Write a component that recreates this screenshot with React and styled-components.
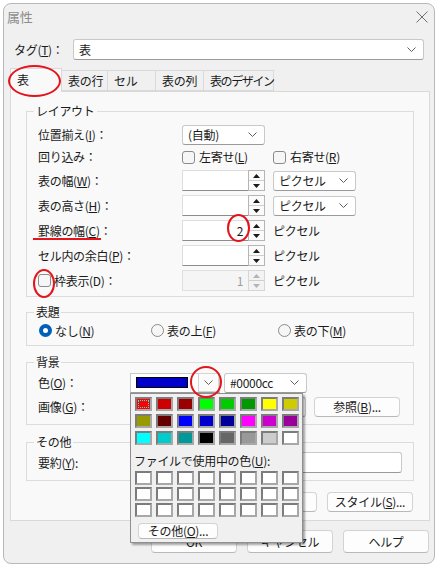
import styled, { createGlobalStyle } from "styled-components";

const GlobalStyle = createGlobalStyle`
  html, body {
    margin: 0;
    padding: 0;
    background: #ffffff;
  }
  body {
    font-family: "Noto Sans CJK JP", "Noto Sans", sans-serif;
    font-size: 12px;
    letter-spacing: -0.3px;
    color: #1b1b1b;
  }
  * {
    box-sizing: border-box;
  }
`;

const Root = styled.div`
  position: relative;
  width: 437px;
  height: 566px;
  padding: 3px 0 0 3px;
`;

const Window = styled.div`
  width: 432px;
  height: 561px;
  border: 1px solid #b8b8b8;
  border-radius: 8px;
  background: #f0f0f0;
  overflow: hidden;
  display: flex;
  flex-direction: column;
  padding: 0 4px 0 6px;
`;

const TitleBar = styled.div`
  height: 26px;
  display: flex;
  align-items: center;
  justify-content: space-between;
  margin-left: -3px;
  padding-right: 2px;
  color: #8d8d8d;
  font-size: 13px;
  line-height: 16px;
`;

const TagRow = styled.div`
  margin-top: 9px;
  height: 21px;
  display: flex;
  align-items: center;
  padding: 0 6px 0 4px;
`;

const TagLabel = styled.span`
  width: 59px;
  line-height: 16px;
`;

const Box = styled.div`
  height: ${(p) => p.$h || 20}px;
  width: ${(p) => (p.$w ? `${p.$w}px` : "auto")};
  flex: ${(p) => (p.$w ? "none" : 1)};
  background: #ffffff;
  border: 1px solid #c9c9c9;
  border-bottom-color: #9a9a9a;
  border-radius: 3px;
  display: flex;
  align-items: center;
  justify-content: space-between;
  padding: 0 7px 0 5px;
  line-height: 16px;
  white-space: nowrap;
`;

const Chevron = () => (
  <svg width="9" height="5" viewBox="0 0 9 5">
    <polyline points="0.5,0.5 4.5,4.5 8.5,0.5" fill="none" stroke="#5f5f5f" strokeWidth="1" />
  </svg>
);

const Tabs = styled.div`
  margin-top: 8px;
  height: 23px;
  display: flex;
  align-items: flex-end;
`;

const Tab = styled.div`
  position: relative;
  z-index: ${(p) => (p.$active ? 2 : 0)};
  width: ${(p) => p.$w}px;
  height: ${(p) => (p.$active ? 24 : 21)}px;
  margin-bottom: ${(p) => (p.$active ? -1 : 0)}px;
  margin-left: ${(p) => (p.$first ? 0 : -1)}px;
  background: ${(p) => (p.$active ? "#f9f9f9" : "#f0f0f0")};
  border: 1px solid #d9d9d9;
  border-bottom: ${(p) => (p.$active ? "none" : "1px solid #d9d9d9")};
  padding: ${(p) => (p.$active ? "3px" : "2px")} 0 0 6px;
  line-height: 16px;
  white-space: nowrap;
  letter-spacing: ${(p) => (p.$tight ? "-1.4px" : "-0.3px")};
`;

const Panel = styled.div`
  height: 430px;
  background: #f9f9f9;
  border: 1px solid #d9d9d9;
  padding: 11px 15px 0 15px;
  display: flex;
  flex-direction: column;
`;

const Group = styled.fieldset`
  margin: ${(p) => p.$mt || 0}px 0 0 0;
  padding: ${(p) => p.$pt || 0}px 11px ${(p) => p.$pb || 0}px 11px;
  border: 1px solid #dcdcdc;
  min-width: 0;
`;

const Legend = styled.legend`
  margin-left: -4px;
  padding: 0 2px;
  line-height: 16px;
  font-size: 12px;
`;

const Row = styled.div`
  height: ${(p) => p.$h}px;
  display: flex;
  align-items: center;
  margin-top: ${(p) => p.$mt || 0}px;
`;

const RowLabel = styled.span`
  width: ${(p) => p.$w}px;
  flex: none;
  display: flex;
  align-items: center;
  line-height: 16px;
  white-space: nowrap;
`;

const U = styled.u`
  text-underline-offset: 1px;
`;

const Check = styled.span`
  width: 13px;
  height: 13px;
  flex: none;
  border: 1px solid #8b8b8b;
  border-radius: 3px;
  background: #f6f6f6;
  margin-right: ${(p) => p.$mr ?? 4}px;
`;

const CheckItem = styled.label`
  width: ${(p) => p.$w}px;
  margin-left: ${(p) => p.$ml || 0}px;
  display: flex;
  align-items: center;
  line-height: 16px;
  white-space: nowrap;
`;

const Radio = styled.span`
  width: 13px;
  height: 13px;
  flex: none;
  border-radius: 50%;
  margin-right: 3px;
  border: ${(p) => (p.$on ? "4px solid #005fb8" : "1px solid #8b8b8b")};
  background: ${(p) => (p.$on ? "#ffffff" : "#f6f6f6")};
`;

const SpinWrap = styled.div`
  width: 83px;
  height: 21px;
  flex: none;
  display: flex;
`;

const SpinText = styled.div`
  flex: 1;
  background: ${(p) => (p.$off ? "#f5f5f5" : "#ffffff")};
  border: 1px solid ${(p) => (p.$off ? "#e0e0e0" : "#dedede")};
  border-bottom-color: ${(p) => (p.$off ? "#e0e0e0" : "#8d8d8d")};
  border-right: none;
  text-align: right;
  padding-right: 5px;
  line-height: 19px;
  color: ${(p) => (p.$off ? "#9c9c9c" : "#1b1b1b")};
`;

const SpinBtns = styled.div`
  width: 17px;
  display: flex;
  flex-direction: column;
  border: 1px solid ${(p) => (p.$off ? "#d6d6d6" : "#b5b5b5")};
  background: ${(p) => (p.$off ? "#f3f3f3" : "#fbfbfb")};
`;

const SpinHalf = styled.div`
  flex: 1;
  display: flex;
  align-items: center;
  justify-content: center;
  border-top: ${(p) => (p.$bottom ? "1px solid #cfcfcf" : "none")};
`;

const Arrow = ({ down, off }) => (
  <svg width="7" height="4" viewBox="0 0 7 4">
    <polygon
      points={down ? "0,0 7,0 3.5,4" : "0,4 7,4 3.5,0"}
      fill={off ? "#b4b4b4" : "#1b1b1b"}
    />
  </svg>
);

const Unit = styled.span`
  margin-left: 8px;
  line-height: 16px;
`;

const Button = styled.div`
  width: ${(p) => p.$w || 86}px;
  height: ${(p) => p.$h || 20}px;
  flex: none;
  display: flex;
  align-items: center;
  justify-content: center;
  background: #fdfdfd;
  border: 1px solid #d3d3d3;
  border-bottom-color: #b8b8b8;
  border-radius: 4px;
  line-height: 16px;
  white-space: nowrap;
  margin: ${(p) => p.$m || 0};
`;

const PanelButtons = styled.div`
  margin-top: 11px;
  display: flex;
  justify-content: flex-end;
  gap: 10px;
  padding-right: 1px;
`;

const DialogButtons = styled.div`
  margin-top: 9px;
  display: flex;
  justify-content: flex-end;
  gap: 10px;
  padding-right: 1px;
`;

const ColorCombo = styled.div`
  width: 90px;
  height: 20px;
  flex: none;
  display: flex;
  align-items: center;
  background: #ffffff;
  border: 1px solid #c9c9c9;
  border-bottom-color: #9a9a9a;
  padding-left: 5px;
  margin-right: 4px;
`;

const ColorBar = styled.div`
  width: 52px;
  height: 11px;
  background: ${(p) => p.$c};
  border: 1px solid #000000;
`;

const DropBtn = styled.div`
  margin-left: auto;
  width: 21px;
  height: 19px;
  display: flex;
  align-items: center;
  justify-content: center;
  border: 1px solid #d4d4d4;
  background: #fbfbfb;
`;

const Popup = styled.div`
  position: absolute;
  z-index: 5;
  left: 130px;
  top: 393px;
  width: 173px;
  height: 150px;
  background: #f0f0f0;
  border: 1px solid #8f8f8f;
  box-shadow: 2px 2px 2px rgba(0, 0, 0, 0.35);
  padding: 3px 0 0 4px;
`;

const Palette = styled.div`
  display: grid;
  grid-template-columns: repeat(8, 17px);
  grid-auto-rows: 14px;
  column-gap: 4px;
  row-gap: ${(p) => (p.$used ? 2 : 3)}px;
  margin-top: ${(p) => p.$mt || 0}px;
`;

const Cell = styled.div`
  position: relative;
  background: ${(p) => p.$c};
  border: 2px solid;
  border-color: #7c7c7c #a8a8a8 #a8a8a8 #7c7c7c;
  &::after {
    content: "";
    display: ${(p) => (p.$focus ? "block" : "none")};
    position: absolute;
    inset: 1px;
    border: 1px dotted #00ffff;
  }
`;

const UsedLabel = styled.div`
  margin: 9px 0 0 -1px;
  line-height: 14px;
  white-space: nowrap;
`;

const Ring = styled.div`
  position: absolute;
  z-index: 10;
  left: ${(p) => p.$x}px;
  top: ${(p) => p.$y}px;
  width: ${(p) => p.$w}px;
  height: ${(p) => p.$h}px;
  border: 2px solid #e3141b;
  border-radius: 50%;
`;

const RedLine = styled.div`
  position: absolute;
  z-index: 10;
  left: 33px;
  top: 238px;
  width: 68px;
  height: 2px;
  background: #e3141b;
`;

const Spin = ({ value, off }) => (
  <SpinWrap>
    <SpinText $off={off}>{value}</SpinText>
    <SpinBtns $off={off}>
      <SpinHalf>
        <Arrow off={off} />
      </SpinHalf>
      <SpinHalf $bottom>
        <Arrow down off={off} />
      </SpinHalf>
    </SpinBtns>
  </SpinWrap>
);

const Select = ({ w, children }) => (
  <Box $w={w} $h={20}>
    <span>{children}</span>
    <Chevron />
  </Box>
);

const paletteColors = [
  "#ff0000", "#cc0000", "#990000", "#00ff00", "#00cc00", "#009900", "#ffff00", "#cccc00",
  "#999900", "#660000", "#0000ff", "#0000cc", "#000099", "#ff00ff", "#cc00cc", "#990099",
  "#00ffff", "#00cccc", "#009999", "#000000", "#666666", "#999999", "#cccccc", "#ffffff",
];

const tabs = [
  { t: "表", w: 52, active: true },
  { t: "表の行", w: 47 },
  { t: "セル", w: 49 },
  { t: "表の列", w: 49 },
  { t: "表のデザイン", w: 71, tight: true },
];

const App = () => {
  return (
    <Root>
      <GlobalStyle />
      <Window>
        <TitleBar>
          <span>属性</span>
          <svg width="12" height="12" viewBox="0 0 12 12">
            <path d="M0.5 0.5 L11.5 11.5 M11.5 0.5 L0.5 11.5" stroke="#6f6f6f" strokeWidth="1" />
          </svg>
        </TitleBar>

        <TagRow>
          <TagLabel>
            タグ(<U>T</U>)：
          </TagLabel>
          <Box $h={21}>
            <span>表</span>
            <Chevron />
          </Box>
        </TagRow>

        <Tabs>
          {tabs.map((tab, i) => (
            <Tab key={tab.t} $w={tab.w} $active={tab.active} $tight={tab.tight} $first={i === 0}>
              {tab.t}
            </Tab>
          ))}
        </Tabs>

        <Panel>
          <Group $pt={4} $pb={3}>
            <Legend>レイアウト</Legend>
            <Row $h={23}>
              <RowLabel $w={144}>
                位置揃え(<U>I</U>)：
              </RowLabel>
              <Select w={83}>(自動)</Select>
            </Row>
            <Row $h={22}>
              <RowLabel $w={144}>回り込み：</RowLabel>
              <CheckItem $w={91}>
                <Check />
                左寄せ(<U>L</U>)
              </CheckItem>
              <CheckItem $w={100}>
                <Check />
                右寄せ(<U>R</U>)
              </CheckItem>
            </Row>
            <Row $h={25}>
              <RowLabel $w={144}>
                表の幅(<U>W</U>)：
              </RowLabel>
              <Spin />
              <Unit>
                <Select w={83}>ピクセル</Select>
              </Unit>
            </Row>
            <Row $h={25}>
              <RowLabel $w={144}>
                表の高さ(<U>H</U>)：
              </RowLabel>
              <Spin />
              <Unit>
                <Select w={83}>ピクセル</Select>
              </Unit>
            </Row>
            <Row $h={25}>
              <RowLabel $w={144}>
                罫線の幅(<U>C</U>)：
              </RowLabel>
              <Spin value="2" />
              <Unit>ピクセル</Unit>
            </Row>
            <Row $h={25}>
              <RowLabel $w={144}>
                セル内の余白(<U>P</U>)：
              </RowLabel>
              <Spin />
              <Unit>ピクセル</Unit>
            </Row>
            <Row $h={25}>
              <RowLabel $w={144}>
                <Check $mr={3} />
                枠表示(D)：
              </RowLabel>
              <Spin value="1" off />
              <Unit>ピクセル</Unit>
            </Row>
          </Group>

          <Group $mt={7} $pb={4}>
            <Legend>表題</Legend>
            <Row $h={21}>
              <CheckItem $w={112} $ml={1}>
                <Radio $on />
                なし(<U>N</U>)
              </CheckItem>
              <CheckItem $w={127}>
                <Radio />
                表の上(<U>F</U>)
              </CheckItem>
              <CheckItem $w={110}>
                <Radio />
                表の下(<U>M</U>)
              </CheckItem>
            </Row>
          </Group>

          <Group $mt={8} $pt={2} $pb={6}>
            <Legend>背景</Legend>
            <Row $h={21}>
              <RowLabel $w={92}>
                色(<U>O</U>)：
              </RowLabel>
              <ColorCombo>
                <ColorBar $c="#0000cc" />
                <DropBtn>
                  <Chevron />
                </DropBtn>
              </ColorCombo>
              <Select w={83}>#0000cc</Select>
            </Row>
            <Row $h={22} $mt={3}>
              <RowLabel $w={92}>
                画像(<U>G</U>)：
              </RowLabel>
              <Box $w={176} $h={20} />
              <Button $w={86} $h={20} $m="0 0 0 8px">
                参照(<U>B</U>)...
              </Button>
            </Row>
          </Group>

          <Group $mt={9} $pt={2} $pb={7}>
            <Legend>その他</Legend>
            <Row $h={21}>
              <RowLabel $w={92}>
                要約(<U>Y</U>):
              </RowLabel>
              <Box $h={21} />
            </Row>
          </Group>

          <PanelButtons>
            <Button>
              枠線(<U>A</U>)...
            </Button>
            <Button>
              スタイル(<U>S</U>)...
            </Button>
          </PanelButtons>
        </Panel>

        <DialogButtons>
          <Button $h={23}>OK</Button>
          <Button $h={23}>キャンセル</Button>
          <Button $h={23}>ヘルプ</Button>
        </DialogButtons>
      </Window>

      <Popup>
        <Palette>
          {paletteColors.map((c, i) => (
            <Cell key={i} $c={c} $focus={i === 0} />
          ))}
        </Palette>
        <UsedLabel>
          ファイルで使用中の色(<U>U</U>):
        </UsedLabel>
        <Palette $used $mt={3}>
          {Array.from({ length: 24 }).map((_, i) => (
            <Cell key={i} $c="#ffffff" />
          ))}
        </Palette>
        <Button $w={80} $h={16} $m="6px 0 0 3px">
          その他(<U>O</U>)...
        </Button>
      </Popup>

      <Ring $x={8} $y={65} $w={53} $h={32} />
      <RedLine />
      <Ring $x={227} $y={214} $w={23} $h={28} />
      <Ring $x={33} $y={269} $w={22} $h={29} />
      <Ring $x={190} $y={366} $w={32} $h={32} />
    </Root>
  );
};

export default App;
